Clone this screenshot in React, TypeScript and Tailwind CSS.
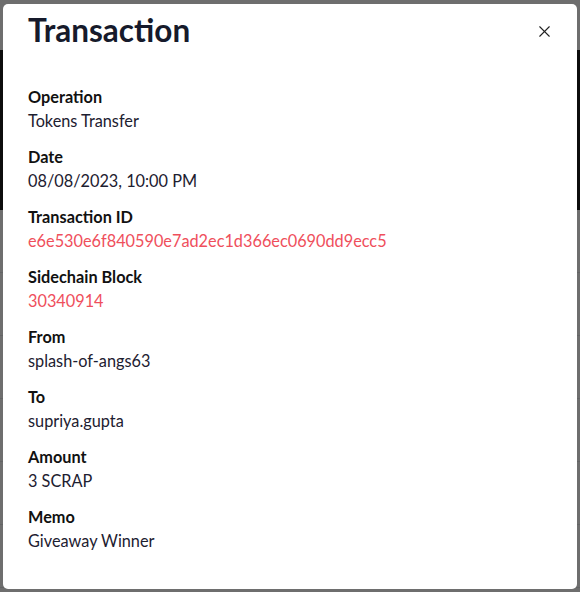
import React from 'react';
import { X } from 'lucide-react';

const fields = [
  { label: 'Operation', value: 'Tokens Transfer' },
  { label: 'Date', value: '08/08/2023, 10:00 PM' },
  { label: 'Transaction ID', value: 'e6e530e6f840590e7ad2ec1d366ec0690dd9ecc5', link: true },
  { label: 'Sidechain Block', value: '30340914', link: true },
  { label: 'From', value: 'splash-of-angs63' },
  { label: 'To', value: 'supriya.gupta' },
  { label: 'Amount', value: '3 SCRAP' },
  { label: 'Memo', value: 'Giveaway Winner' },
];

export default function App() {
  return (
    <div className="relative w-[580px] h-[592px] overflow-hidden bg-white" style={{ fontFamily: 'Lato, "Noto Sans", sans-serif' }}>
      {/* page behind the modal */}
      <div className="flex flex-col">
        <div className="h-[50px] shrink-0 bg-white" />
        <div className="h-[160px] shrink-0 bg-[#1f1f1f]" />
        <div className="h-[63px] shrink-0 border-b border-gray-200" />
        <div className="h-[63px] shrink-0 border-b border-gray-200" />
        <div className="h-[63px] shrink-0 border-b border-gray-200" />
        <div className="h-[63px] shrink-0 border-b border-gray-200" />
        <div className="h-[63px] shrink-0 border-b border-gray-200" />
        <div className="h-[63px] shrink-0 border-b border-gray-200" />
        <div className="flex shrink-0 gap-[110px] pl-[30px] text-[15px] leading-[20px] text-gray-900">
          <span>transfer</span>
          <span>splash-of-angs63</span>
          <span>supriya.gupta</span>
        </div>
      </div>
      <div className="absolute inset-0 bg-black/[0.57]" />

      {/* modal */}
      <div className="absolute left-[3px] top-[4px] w-[574px] h-[585px] bg-white rounded-[5px] px-[25px] pt-[6px]">
        <div className="flex items-start justify-between">
          <h1 className="text-[31.5px] leading-[40px] font-bold text-[#161a2b]">Transaction</h1>
          <button className="mt-[12px] mr-[-2px] text-[#222]">
            <X className="w-[19px] h-[19px]" strokeWidth={1.4} />
          </button>
        </div>
        <div className="mt-[35px] flex flex-col gap-[12px]">
          {fields.map((f) => (
            <div key={f.label} className="flex flex-col">
              <span className="text-[16.3px] leading-[24px] font-bold text-[#111]">{f.label}</span>
              <span className={`text-[16.3px] leading-[24px] ${f.link ? 'text-[#ef4f5c]' : 'text-[#1d2030]'}`}>{f.value}</span>
            </div>
          ))}
        </div>
      </div>
    </div>
  );
}
